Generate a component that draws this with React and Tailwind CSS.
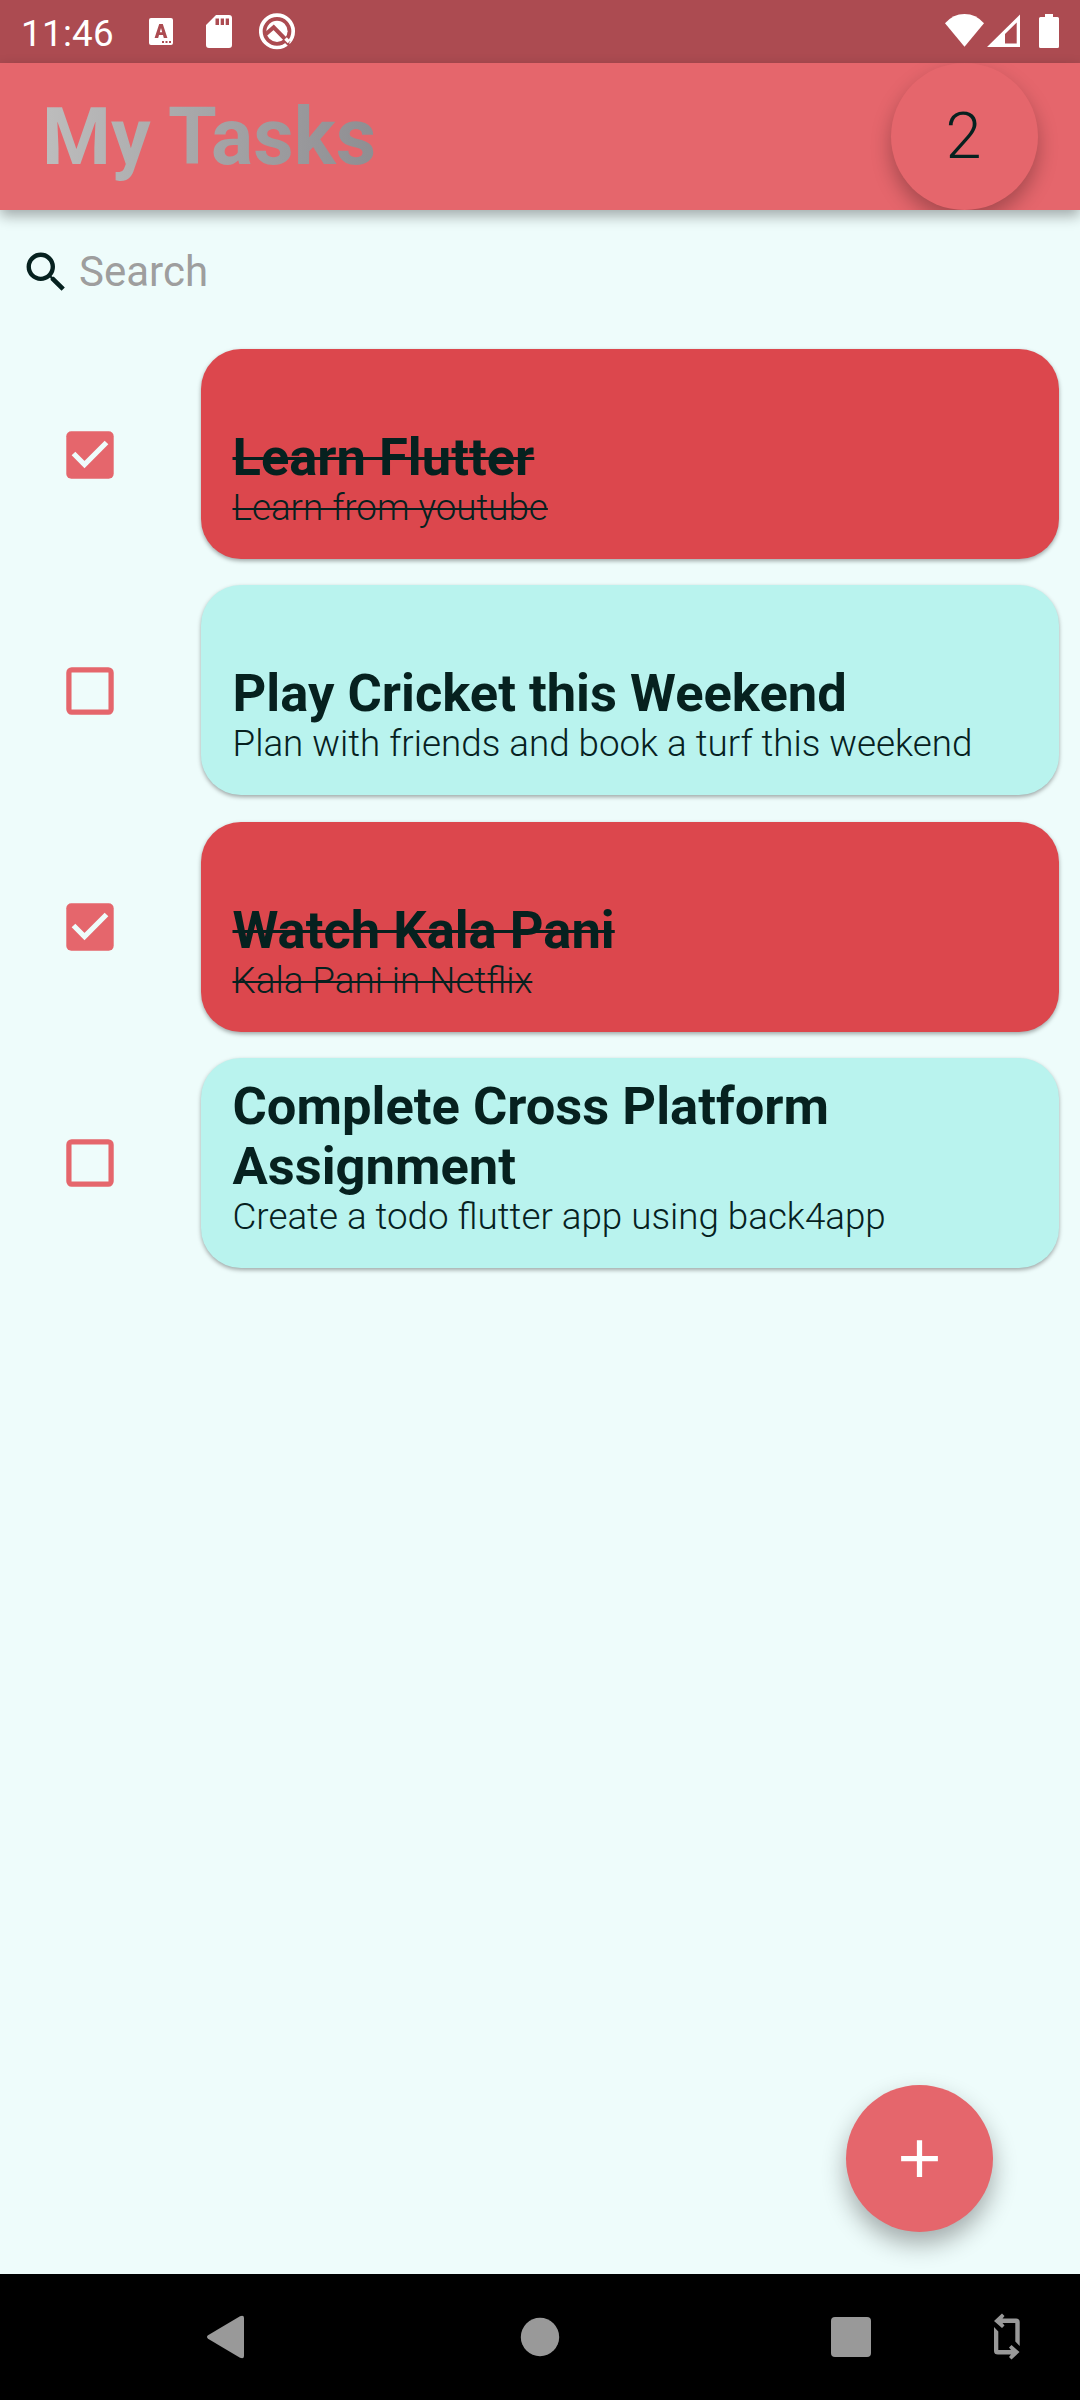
import React from "react";

const TASKS = [
  { title: "Learn Flutter", note: "Learn from youtube", done: true },
  { title: "Play Cricket this Weekend", note: "Plan with friends and book a turf this weekend", done: false },
  { title: "Watch Kala Pani", note: "Kala Pani in Netflix", done: true },
  { title: "Complete Cross Platform Assignment", note: "Create a todo flutter app using back4app", done: false },
];

function StatusBar() {
  return (
    <div className="flex h-[63px] shrink-0 items-start justify-between bg-[#ac4b51] text-white">
      <div className="flex items-start pl-[21px]">
        <span className="mt-[12px] w-[128px] text-[36.75px] leading-[43px] tracking-[0.3px]">11:46</span>
        <svg className="mt-[18px] mr-[33px]" width="24" height="27" viewBox="0 0 24 27">
          <path
            fillRule="evenodd"
            fill="currentColor"
            d="M2 0H22Q24 0 24 2V25Q24 27 22 27H2Q0 27 0 25V2Q0 0 2 0ZM10.2 6L5.6 20H9.2L10 17H14L14.8 20H18.4L13.8 6ZM12 10L13.2 14.2H10.8ZM13 23V25H15V23ZM16.5 23V25H18.500V23ZM20 23V25H22V23Z"
          />
        </svg>
        <svg className="mt-[15px] mr-[27px]" width="26" height="33" viewBox="0 0 26 33">
          <path
            fillRule="evenodd"
            fill="currentColor"
            d="M10 0H23Q26 0 26 3V30Q26 33 23 33H3Q0 33 0 30V10ZM9.500 3.500V10H13V3.500ZM14.700 3.500V10H18V3.500ZM19.700 3.500V10H23V3.500Z"
          />
        </svg>
        <svg className="mt-[13px]" width="37" height="37" viewBox="0 0 37 37" fill="none">
          <circle cx="18" cy="18.300" r="16.200" stroke="white" strokeWidth="3.700" />
          <circle cx="18" cy="18.300" r="10.600" fill="white" />
          <path d="M7 21L14.700 14.300L30 30" stroke="#ac4b51" strokeWidth="4" />
          <path d="M26 28L34 36" stroke="#ac4b51" strokeWidth="2.600" />
          <path d="M26.500 25.500L30 29" stroke="white" strokeWidth="3.500" />
        </svg>
      </div>
      <div className="flex items-start pr-[21px]">
        <svg className="mt-[14px] mr-[3px]" width="39" height="33" viewBox="0 0 39 33">
          <path fill="currentColor" d="M0 9.300Q8 0 19.500 0T39 9.300L19.500 32.700Z" />
        </svg>
        <svg className="mt-[14px] mr-[19px]" width="33" height="33" viewBox="0 0 33 33">
          <path fill="currentColor" fillRule="evenodd" d="M33 .5V33H0ZM29.700 8.500L18 20V29.500H29.700Z" />
        </svg>
        <svg className="mt-[14px]" width="20" height="34" viewBox="0 0 20 34">
          <path fill="currentColor" d="M6 0H14V3H18.500Q20 3 20 4.500V32.500Q20 34 18.500 34H1.500Q0 34 0 32.500V4.500Q0 3 1.500 3H6Z" />
        </svg>
      </div>
    </div>
  );
}

function Header({ count }) {
  return (
    <header className="relative h-[147px] shrink-0 bg-[#e5666c] shadow-[0_6px_13px_rgba(0,0,0,0.32)]">
      <div className="flex h-full items-center justify-between overflow-hidden pr-[42px] pl-[42px]">
        <h1 className="bg-linear-to-r from-[#bdbdbd] to-[#8e8e92] bg-clip-text text-[78.75px] leading-[92px] font-bold text-transparent">
          My Tasks
        </h1>
        <div className="flex size-[147px] items-center justify-center rounded-full bg-[#e5666c] pt-[1px] pr-[2px] text-[65px] font-light shadow-[0_10px_20px_rgba(0,0,0,0.28)]">
          {count}
        </div>
      </div>
    </header>
  );
}

function SearchField() {
  return (
    <div className="flex h-[124px] items-center pl-[20px]">
      <svg className="size-[52.5px]" viewBox="0 0 24 24" fill="currentColor">
        <path d="M15.5 14h-.79l-.28-.27A6.471 6.471 0 0 0 16 9.500 6.500 6.500 0 1 0 9.500 16c1.610 0 3.090-.590 4.230-1.570l.270.280v.790l5 4.990L20.490 19l-4.990-5zm-6 0C7.010 14 5 11.990 5 9.500S7.010 5 9.500 5 14 7.010 14 9.500 11.990 14 9.500 14z" />
      </svg>
      <span className="pb-[2px] pl-[6.5px] text-[42px] leading-[49px] text-[#9e9e9e]">Search</span>
    </div>
  );
}

function Checkbox({ checked }) {
  return (
    <svg className="mt-[1px] size-[48px]" viewBox="0 0 48 48" fill="none">
      {checked ? (
        <>
          <rect x=".3" y=".3" width="47.400" height="47.400" rx="5" fill="#e5666c" />
          <path d="M7.500 22.500L18.500 33.500L40.500 11.500" stroke="#eefcfb" strokeWidth="5.200" />
        </>
      ) : (
        <rect x="2.900" y="2.900" width="42.200" height="42.200" rx="2.800" stroke="#e5666c" strokeWidth="5.250" />
      )}
    </svg>
  );
}

function Task({ task }) {
  const tone = task.done ? "bg-[#dc474d]" : "bg-[#b9f3ee]";
  const strike = task.done ? "line-through" : "";
  return (
    <li className="flex h-[210px] items-center">
      <div className="flex w-[201px] shrink-0 pl-[66px]">
        <Checkbox checked={task.done} />
      </div>
      <div
        className={`flex h-full w-[858px] flex-col items-start justify-end rounded-[40px] px-[31.5px] pb-[31px] shadow-[0_2px_4px_rgba(0,0,0,0.34)] ${tone}`}
      >
        <h2 className={`text-[52.5px] leading-[60px] font-bold decoration-[3px] ${strike}`}>{task.title}</h2>
        <p className={`text-[36.75px] leading-[41px] font-light whitespace-nowrap decoration-[2px] ${strike}`}>
          {task.note}
        </p>
      </div>
    </li>
  );
}

function NavBar() {
  return (
    <nav className="flex h-[126px] shrink-0 items-center bg-black text-[#999999]">
      <svg className="ml-[206px]" width="39" height="44" viewBox="0 0 39 44">
        <path fill="currentColor" d="M2 20.300L34 1.300Q38 -.2 38 3V41Q38 44.200 34 42.700L2 23.700Q0 22 2 20.300Z" />
      </svg>
      <svg className="ml-[275px]" width="40" height="40" viewBox="0 0 40 40">
        <circle cx="20" cy="20" r="19.200" fill="currentColor" />
      </svg>
      <div className="ml-[271px] size-[40px] rounded-[4px] bg-[#999999]" />
      <svg className="ml-[122px]" width="28" height="48" viewBox="0 0 28 48" fill="currentColor">
        <path d="M1 8L9 .5L11.500 3L9.500 5.500H23Q26.700 5.500 26.700 9V33L22.300 28.500V10H9.500L11.500 12.500L9 15Z" />
        <path d="M26.500 39L18.500 46.500L16 44L18 41.500H5Q1 41.500 1 38V14L5.300 18.500V37H18L16 34.500L18.500 32Z" />
      </svg>
    </nav>
  );
}

export default function App() {
  const remaining = TASKS.filter((task) => !task.done).length;
  return (
    <div className="relative flex h-[2400px] w-[1080px] flex-col overflow-hidden bg-[#eefcfb] font-['Roboto',sans-serif] text-[#06211f]">
      <StatusBar />
      <Header count={remaining} />
      <main className="flex-1">
        <SearchField />
        <ul className="flex flex-col gap-[26.250px] pt-[15px]">
          {TASKS.map((task) => (
            <Task key={task.title} task={task} />
          ))}
        </ul>
      </main>
      <button
        aria-label="Add task"
        className="absolute right-[87px] bottom-[168px] flex size-[147px] items-center justify-center rounded-full bg-[#e5666c] text-white shadow-[0_12px_24px_rgba(0,0,0,0.32)]"
      >
        <svg className="size-[63px]" viewBox="0 0 24 24" fill="currentColor">
          <path d="M19 13h-6v6h-2v-6H5v-2h6V5h2v6h6z" />
        </svg>
      </button>
      <NavBar />
    </div>
  );
}
